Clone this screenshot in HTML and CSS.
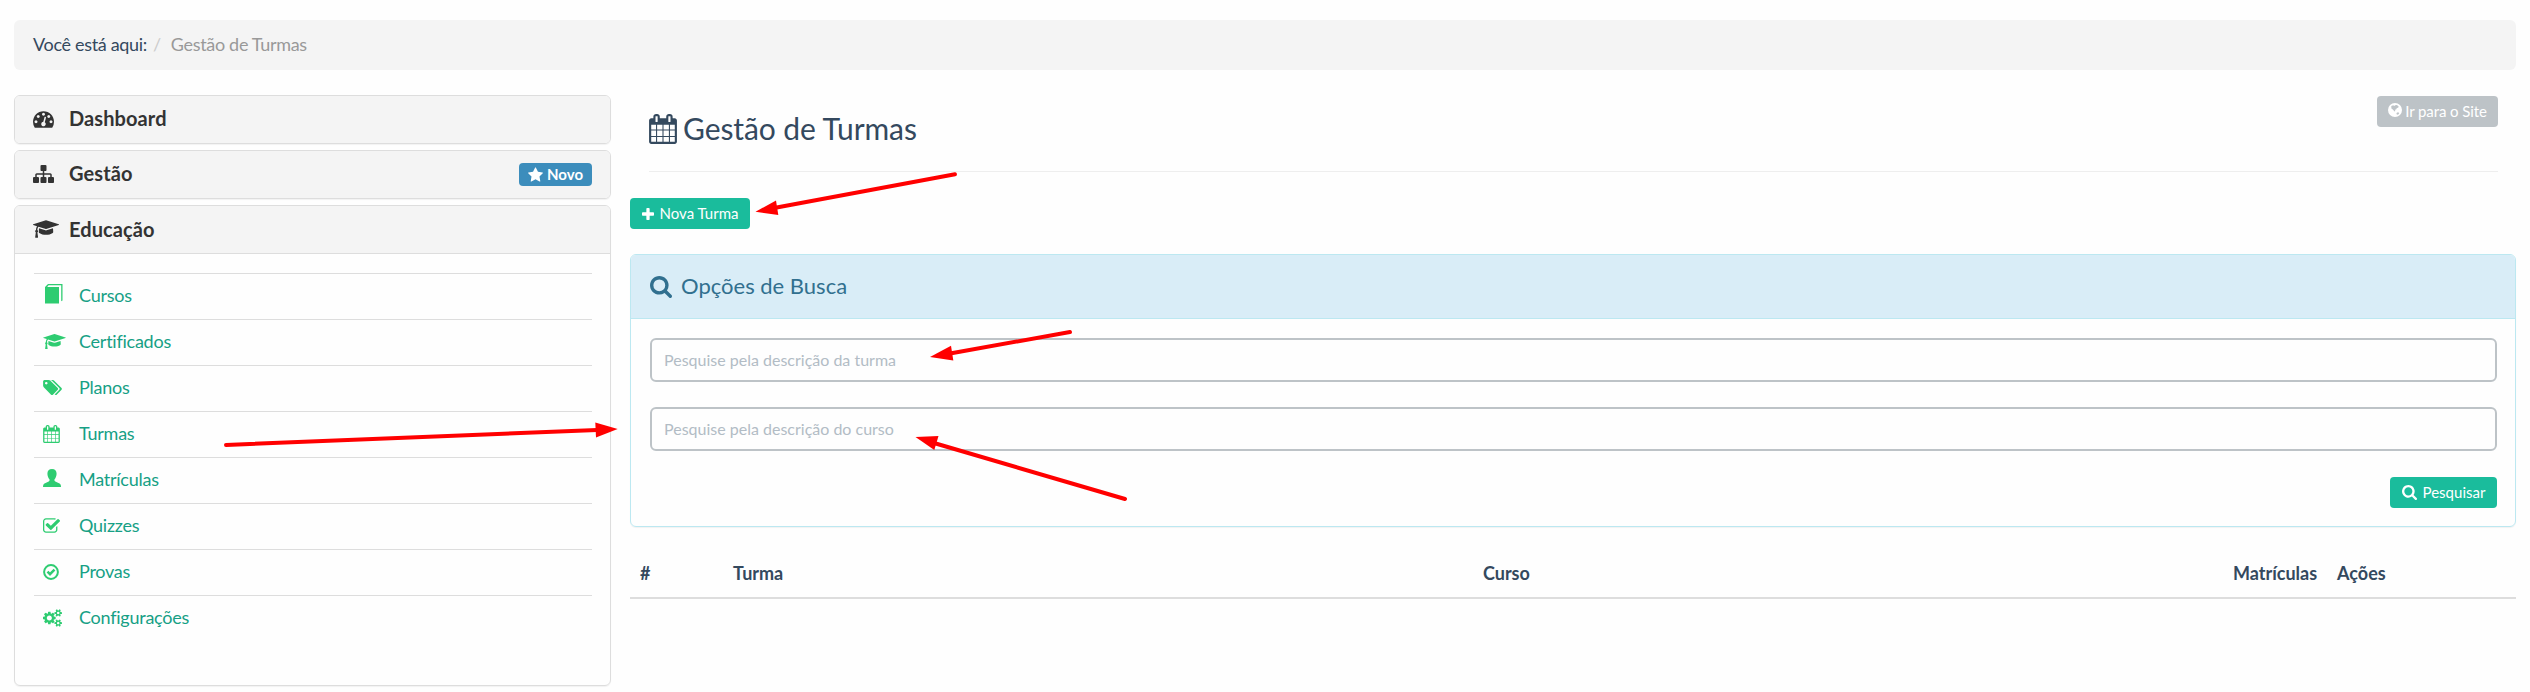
FILE: index.html
```html
<!DOCTYPE html>
<html lang="pt-BR">
<head>
<meta charset="utf-8">
<title>Gestão de Turmas</title>
<link rel="stylesheet" href="styles.css">
</head>
<body>
<svg class="defs" width="0" height="0">
  <symbol id="calendar" viewBox="64 0 1664 1792"><path d="M192 1664h288v-288h-288v288zm352 0h320v-288h-320v288zm-352-352h288v-320h-288v320zm352 0h320v-320h-320v320zm-352-384h288v-288h-288v288zm736 736h320v-288h-320v288zm-384-736h320v-288h-320v288zm768 736h288v-288h-288v288zm-384-352h320v-320h-320v320zm-352-864v-288q0-13-9.500-22.500t-22.500-9.500h-64q-13 0-22.500 9.500t-9.500 22.500v288q0 13 9.500 22.500t22.500 9.500h64q13 0 22.500-9.500t9.500-22.500zm736 864h288v-320h-288v320zm-384-384h320v-288h-320v288zm384 0h288v-288h-288v288zm32-480v-288q0-13-9.500-22.500t-22.500-9.500h-64q-13 0-22.500 9.500t-9.500 22.500v288q0 13 9.500 22.500t22.500 9.500h64q13 0 22.500-9.500t9.500-22.500zm384-64v1280q0 52-38 90t-90 38h-1408q-52 0-90-38t-38-90v-1280q0-52 38-90t90-38h128v-96q0-66 47-113t113-47h64q66 0 113 47t47 113v96h384v-96q0-66 47-113t113-47h64q66 0 113 47t47 113v96h128q52 0 90 38t38 90z"/></symbol>
  <symbol id="search" viewBox="64 128 1664 1664"><path d="M1216 832q0-185-131.500-316.500t-316.500-131.500-316.500 131.500-131.500 316.500 131.500 316.500 316.500 131.500 316.500-131.500 131.500-316.500zm512 832q0 52-38 90t-90 38q-54 0-90-38l-343-342q-179 124-399 124-143 0-273.500-55.500t-225-150-150-225-55.500-273.500 55.500-273.500 150-225 225-150 273.500-55.500 273.500 55.500 225 150 150 225 55.500 273.500q0 220-124 399l343 343q37 37 37 90z"/></symbol>
  <symbol id="plus" viewBox="192 128 1408 1408"><path d="M1600 736v192q0 40-28 68t-68 28h-416v416q0 40-28 68t-68 28h-192q-40 0-68-28t-28-68v-416h-416q-40 0-68-28t-28-68v-192q0-40 28-68t68-28h416v-416q0-40 28-68t68-28h192q40 0 68 28t28 68v416h416q40 0 68 28t28 68z"/></symbol>
  <symbol id="star" viewBox="64 32 1664 1600"><path d="M1728 647q0 22-26 48l-363 354 86 500q1 7 1 20 0 21-10.500 35.500t-30.500 14.500q-19 0-40-12l-449-236-449 236q-22 12-40 12-21 0-31.500-14.500t-10.500-35.500q0-6 2-20l86-500-364-354q-25-27-25-48 0-37 56-46l502-73 225-455q19-41 49-41t49 41l225 455 502 73q56 9 56 46z"/></symbol>
  <symbol id="check-square" viewBox="64 128 1664 1408"><path d="M1472 930v318q0 119-84.500 203.500t-203.500 84.500h-832q-119 0-203.500-84.500t-84.500-203.500v-832q0-119 84.500-203.500t203.500-84.500h832q63 0 117 25 15 7 18 23 3 17-9 29l-49 49q-10 10-23 10-3 0-9-2-23-6-45-6h-832q-66 0-113 47t-47 113v832q0 66 47 113t113 47h832q66 0 113-47t47-113v-254q0-13 9-22l64-64q10-10 23-10 6 0 12 3 20 8 20 29zm231-489l-814 814q-24 24-57 24t-57-24l-430-430q-24-24-24-57t24-57l110-110q24-24 57-24t57 24l263 263 647-647q24-24 57-24t57 24l110 110q24 24 24 57t-24 57z"/></symbol>
  <symbol id="sitemap" viewBox="0 128 1792 1536"><path d="M1792 1248v320q0 40-28 68t-68 28h-320q-40 0-68-28t-28-68v-320q0-40 28-68t68-28h96v-192h-512v192h96q40 0 68 28t28 68v320q0 40-28 68t-68 28h-320q-40 0-68-28t-28-68v-320q0-40 28-68t68-28h96v-192h-512v192h96q40 0 68 28t28 68v320q0 40-28 68t-68 28h-320q-40 0-68-28t-28-68v-320q0-40 28-68t68-28h96v-192q0-52 38-90t90-38h512v-192h-96q-40 0-68-28t-28-68v-320q0-40 28-68t68-28h320q40 0 68 28t28 68v320q0 40-28 68t-68 28h-96v192h512q52 0 90 38t38 90v192h96q40 0 68 28t28 68z"/></symbol>
  <symbol id="gauge" viewBox="0 256 1792 1408"><path d="M384 1152q0-53-37.500-90.500t-90.500-37.500-90.500 37.500-37.500 90.500 37.500 90.500 90.500 37.500 90.500-37.500 37.500-90.500zm192-448q0-53-37.500-90.500t-90.500-37.500-90.500 37.500-37.500 90.500 37.500 90.500 90.500 37.500 90.500-37.500 37.500-90.500zm428 481l101-382q6-26-7.500-48.500t-38.500-29.500-48 6.500-30 39.500l-101 382q-60 5-107 43.500t-63 98.500q-20 77 20 146t117 89 146-20 89-117q16-60-6-117t-72-91zm660-33q0-53-37.500-90.500t-90.500-37.500-90.500 37.500-37.500 90.500 37.500 90.500 90.500 37.500 90.500-37.500 37.500-90.500zm-640-640q0-53-37.500-90.500t-90.500-37.500-90.500 37.500-37.500 90.500 37.500 90.500 90.500 37.500 90.500-37.500 37.500-90.500zm448 192q0-53-37.500-90.500t-90.500-37.500-90.500 37.500-37.500 90.500 37.500 90.500 90.500 37.500 90.500-37.500 37.500-90.500zm320 448q0 261-141 483-19 29-54 29h-1402q-35 0-54-29-141-221-141-483 0-182 71-348t191-286 286-191 348-71 348 71 286 191 191 286 71 348z"/></symbol>
  <symbol id="cap" viewBox="0 128 2304 1536"><path d="M1774 836l18 316q4 69-82 128t-235 93.500-323 34.500-323-34.500-235-93.500-82-128l18-316 574 181q22 7 48 7t48-7zm530-324q0 23-22 31l-1120 352q-4 1-10 1t-10-1l-652-206q-43 34-71 111.500t-34 178.500q63 36 63 109 0 69-58 107l58 433q2 14-8 25-9 11-24 11h-192q-15 0-24-11-10-11-8-25l58-433q-58-38-58-107 0-73 65-111 11-207 98-330l-333-104q-22-8-22-31t22-31l1120-352q4-1 10-1t10 1l1120 352q22 8 22 31z"/></symbol>
  <symbol id="tags" viewBox="0 128 1899 1515"><path d="M448 448q0-53-37.500-90.500t-90.500-37.500-90.500 37.500-37.500 90.500 37.500 90.500 90.500 37.500 90.500-37.500 37.500-90.500zm1067 576q0 53-37 90l-491 492q-39 37-91 37-53 0-90-37l-715-716q-38-37-64.500-101t-26.500-117v-416q0-52 38-90t90-38h416q53 0 117 26.500t102 64.500l715 714q37 39 37 91zm384 0q0 53-37 90l-491 492q-39 37-91 37-36 0-59-14t-53-45l470-470q37-37 37-90 0-52-37-91l-715-714q-38-38-102-64.500t-117-26.500h224q53 0 117 26.500t102 64.500l715 714q37 39 37 91z"/></symbol>
  <symbol id="cogs" viewBox="0 40 1920 1712"><path d="M896 896q0-106-75-181t-181-75-181 75-75 181 75 181 181 75 181-75 75-181zm768 512q0-52-38-90t-90-38-90 38-38 90q0 53 37.500 90.500t90.500 37.500 90.500-37.500 37.500-90.500zm0-1024q0-52-38-90t-90-38-90 38-38 90q0 53 37.500 90.500t90.500 37.500 90.500-37.500 37.500-90.500zm-384 421v185q0 10-7 19.500t-16 10.500l-155 24q-11 35-32 76 34 48 90 115 7 11 7 20 0 12-7 19-23 30-82.500 89.500t-78.500 59.500q-11 0-21-7l-115-90q-37 19-77 31-11 108-23 155-7 24-30 24h-186q-11 0-20-7.500t-10-17.500l-23-153q-34-10-75-31l-118 89q-7 7-20 7-11 0-21-8-144-133-144-160 0-9 7-19 10-14 41-53t47-61q-23-44-35-82l-152-24q-10-1-17-9.500t-7-19.500v-185q0-10 7-19.500t16-10.500l155-24q11-35 32-76-34-48-90-115-7-11-7-20 0-12 7-20 22-30 82-89t79-59q11 0 21 7l115 90q34-18 77-32 11-108 23-154 7-24 30-24h186q11 0 20 7.500t10 17.500l23 153q34 10 75 31l118-89q8-7 20-7 11 0 21 8 144 133 144 160 0 8-7 19-12 16-42 54t-45 60q23 48 34 82l152 23q10 2 17 10.500t7 19.500zm640 533v140q0 16-149 31-12 27-30 52 51 113 51 138 0 4-4 7-122 71-124 71-8 0-46-47t-52-68q-20 2-30 2t-30-2q-14 21-52 68t-46 47q-2 0-124-71-4-3-4-7 0-25 51-138-18-25-30-52-149-15-149-31v-140q0-16 149-31 13-29 30-52-51-113-51-138 0-4 4-7 4-2 35-20t59-34 30-16q8 0 46 46.500t52 67.500q20-2 30-2t30 2q51-71 92-112l6-2q4 0 124 70 4 3 4 7 0 25-51 138 17 23 30 52 149 15 149 31zm0-1024v140q0 16-149 31-12 27-30 52 51 113 51 138 0 4-4 7-122 71-124 71-8 0-46-47t-52-68q-20 2-30 2t-30-2q-14 21-52 68t-46 47q-2 0-124-71-4-3-4-7 0-25 51-138-18-25-30-52-149-15-149-31v-140q0-16 149-31 13-29 30-52-51-113-51-138 0-4 4-7 4-2 35-20t59-34 30-16q8 0 46 46.500t52 67.500q20-2 30-2t30 2q51-71 92-112l6-2q4 0 124 70 4 3 4 7 0 25-51 138 17 23 30 52 149 15 149 31z"/></symbol>
  <symbol id="book" viewBox="0 0 18 20"><path d="M3 0h14.500v16.500l-1.300.8V1.300H3.600L2.200 3H14v16.500H0V3z"/></symbol>
  <symbol id="user" viewBox="0 0 18 18"><path d="M9 0c3 0 4.600 2 4.600 4.700 0 2.200-.9 4.200-2 5.600-.4.800-.2 1.700.7 2.200l4.200 2c1 .5 1.500 1.500 1.500 3.500H0c0-2 .5-3 1.500-3.500l4.200-2c.9-.5 1.100-1.400.7-2.200-1.100-1.400-2-3.400-2-5.600C4.400 2 6 0 9 0z"/></symbol>
  <symbol id="check-circle" viewBox="0 0 16 16"><g fill="none" stroke="currentColor"><circle cx="8" cy="8" r="6.900" stroke-width="2"/><path d="M4.500 7.700l2.500 2.500 4.500-4.500" stroke-width="2.500"/></g></symbol>
  <symbol id="globe" viewBox="0 0 14 14"><path fill-rule="evenodd" d="M7 0a7 7 0 1 0 0 14A7 7 0 0 0 7 0zM3.300 2.900l1.900-.6 1 .7.900-.8 1.700-.2 1.800 1.200-.4 1.500-1.300.3-.8 1.400-1.300.4.600 1.300-.8.300-1.800-1.800-1.400-1.200zM8.400 9.900l1.600-.6 1.300.8-1 1.400-1.400.3z"/></symbol>
</svg>

<nav class="breadcrumb"><span>Você está aqui:</span><span class="sep">/</span><span class="current">Gestão de Turmas</span></nav>

<div class="layout">
  <aside class="sidebar">
    <section class="panel"><h4 class="panel-head"><span class="head-icon"><svg class="i-gauge"><use href="#gauge"/></svg></span>Dashboard</h4></section>
    <section class="panel"><h4 class="panel-head"><span class="head-icon"><svg class="i-sitemap"><use href="#sitemap"/></svg></span>Gestão<span class="badge"><svg><use href="#star"/></svg>Novo</span></h4></section>
    <section class="panel open">
      <h4 class="panel-head"><span class="head-icon"><svg class="i-cap"><use href="#cap"/></svg></span>Educação</h4>
      <ul class="menu">
        <li><span class="menu-icon"><svg class="m-book"><use href="#book"/></svg></span>Cursos</li>
        <li><span class="menu-icon"><svg class="m-cap"><use href="#cap"/></svg></span>Certificados</li>
        <li><span class="menu-icon"><svg class="m-tags"><use href="#tags"/></svg></span>Planos</li>
        <li><span class="menu-icon"><svg class="m-calendar"><use href="#calendar"/></svg></span>Turmas</li>
        <li><span class="menu-icon"><svg class="m-user"><use href="#user"/></svg></span>Matrículas</li>
        <li><span class="menu-icon"><svg class="m-square"><use href="#check-square"/></svg></span>Quizzes</li>
        <li><span class="menu-icon"><svg class="m-circle"><use href="#check-circle"/></svg></span>Provas</li>
        <li><span class="menu-icon"><svg class="m-cogs"><use href="#cogs"/></svg></span>Configurações</li>
      </ul>
    </section>
  </aside>

  <main class="content">
    <header class="page-head">
      <h1><svg><use href="#calendar"/></svg>Gestão de Turmas</h1>
      <a class="btn btn-gray"><svg class="b-globe"><use href="#globe"/></svg>Ir para o Site</a>
    </header>
    <a class="btn btn-new"><svg class="b-plus"><use href="#plus"/></svg>Nova Turma</a>
    <section class="search">
      <h3><svg><use href="#search"/></svg>Opções de Busca</h3>
      <form class="search-body">
        <input type="text" placeholder="Pesquise pela descrição da turma">
        <input type="text" placeholder="Pesquise pela descrição do curso">
        <a class="btn btn-search"><svg class="b-search"><use href="#search"/></svg>Pesquisar</a>
      </form>
    </section>
    <div class="table-head"><span>#</span><span>Turma</span><span>Curso</span><span>Matrículas</span><span>Ações</span></div>
  </main>
</div>

<svg class="arrows" viewBox="0 0 2530 692">
  <g stroke="#f00" stroke-width="4" stroke-linecap="round"><path d="M955 174.300L774 208"/><path d="M1070 332L950 353.500"/><path d="M1125 499L934 443"/><path d="M226 445L597 430"/></g>
  <g fill="#f00"><path d="M755.500 211.700L776 200.500L778.300 215z"/><path d="M930 357L951 345.800L953.300 360.500z"/><path d="M915.500 437L938.500 436L934.300 450z"/><path d="M617.700 429L595.300 422.500L596 437.500z"/></g>
</svg>
</body>
</html>
```
FILE: styles.css
```css
* { box-sizing: border-box; }
body { margin: 0; padding: 20px 14px 0; height: 692px; overflow: hidden; background: #fefefe; font-family: Lato, "Liberation Sans", sans-serif; font-size: 18px; line-height: 1.4; color: #34495e; }
svg { fill: currentColor; display: block; flex: none; }
.defs { position: absolute; }
h1, h3, h4, ul { margin: 0; padding: 0; font-weight: 400; }
.breadcrumb { display: flex; align-items: center; height: 50px; padding: 0 19px; background: #f4f4f4; border-radius: 6px; letter-spacing: -.32px; }
.sep { color: #ccc; padding: 0 10px 0 6px; }
.current { color: #999; }
.layout { display: flex; gap: 19px; margin-top: 25px; }
.sidebar { width: 597px; display: flex; flex-direction: column; gap: 6px; }
.panel { border: 1px solid #ddd; border-radius: 6px; box-shadow: 0 1px 1px rgba(0,0,0,.05); overflow: hidden; }
.open { height: 481px; }
.panel-head { height: 47px; padding: 0 18px 3px; display: flex; align-items: center; background: #f4f4f4; color: #333; font-size: 20px; font-weight: 700; letter-spacing: .1px; }
.open .panel-head { height: 48px; padding-bottom: 1px; border-bottom: 1px solid #ddd; }
.head-icon { width: 36px; }
.i-gauge { width: 21px; height: 17px; margin-top: 2px; }
.i-sitemap { width: 21px; height: 18px; margin-top: 1px; }
.i-cap { width: 26px; height: 18px; }
.badge { margin: 2px 0 0 auto; display: flex; align-items: center; justify-content: center; gap: 4px; width: 73px; height: 23px; background: #3c8dbc; color: #fff; font-size: 15px; letter-spacing: 0; border-radius: 4px; }
.badge svg { width: 15px; height: 15px; }
.menu { list-style: none; padding: 19px 18px 0 19px; color: #16a085; letter-spacing: -.25px; }
.menu li { height: 46px; border-top: 1px solid #ddd; display: flex; align-items: center; padding: 0 0 2px 9px; }
.menu-icon { width: 36px; color: #2ecc71; }
.m-book { width: 18px; height: 20px; margin: -4px 0 0 2px; }
.m-cap { width: 23px; height: 15px; }
.m-tags { width: 19px; height: 15px; }
.m-calendar { width: 17px; height: 18px; }
.m-user { width: 18px; height: 18px; margin-top: -4px; }
.m-square { width: 17px; height: 15px; }
.m-circle { width: 16px; height: 16px; }
.m-cogs { width: 19px; height: 18px; }
.content { flex: 1; }
.page-head { display: flex; justify-content: space-between; margin: 0 18px 0 19px; height: 77px; padding-top: 1px; border-bottom: 1px solid #eee; }
.page-head h1 { display: flex; gap: 6px; font-size: 30px; line-height: 38px; margin-top: 13px; letter-spacing: -.08px; }
.page-head h1 svg { width: 28px; height: 30px; margin-top: 5px; }
.btn { display: flex; align-items: center; justify-content: center; height: 31px; border-radius: 4px; background: #1abc9c; color: #fff; font-size: 15px; }
.btn-gray { width: 121px; background: #bdc3c7; gap: 3px; letter-spacing: -.1px; }
.btn-new { width: 120px; margin-top: 26px; gap: 6px; }
.btn-search { width: 107px; margin-left: auto; gap: 6px; }
.b-globe { width: 14px; height: 14px; margin-top: -3px; }
.b-plus { width: 12px; height: 12px; }
.b-search { width: 15px; height: 15px; }
.search { height: 273px; margin-top: 25px; border: 1px solid #bce8f1; border-radius: 6px; box-shadow: 0 1px 1px rgba(0,0,0,.05); overflow: hidden; }
.search h3 { height: 64px; padding-left: 19px; display: flex; align-items: center; gap: 9px; background: #d9edf7; color: #31708f; border-bottom: 1px solid #bce8f1; font-size: 22px; }
.search h3 svg { width: 22px; height: 22px; }
.search-body { padding: 19px 18px 0 19px; }
.search input { display: block; width: 100%; height: 44px; margin: 0 0 25px; padding: 0 12px 1px; border: 2px solid #bdc3c7; border-radius: 6px; background: transparent; font: 16px Lato, sans-serif; }
.search input::placeholder { color: #b2bcc5; opacity: 1; }
.search input + .btn { margin-top: 26px; }
.table-head { display: grid; grid-template-columns: 93px 750px 750px 104px 1fr; align-items: center; height: 50px; margin-top: 22px; padding: 2px 10px 0; border-bottom: 2px solid #ddd; font-weight: 700; }
.arrows { position: absolute; left: 0; top: 0; width: 2530px; height: 692px; pointer-events: none; }
```
